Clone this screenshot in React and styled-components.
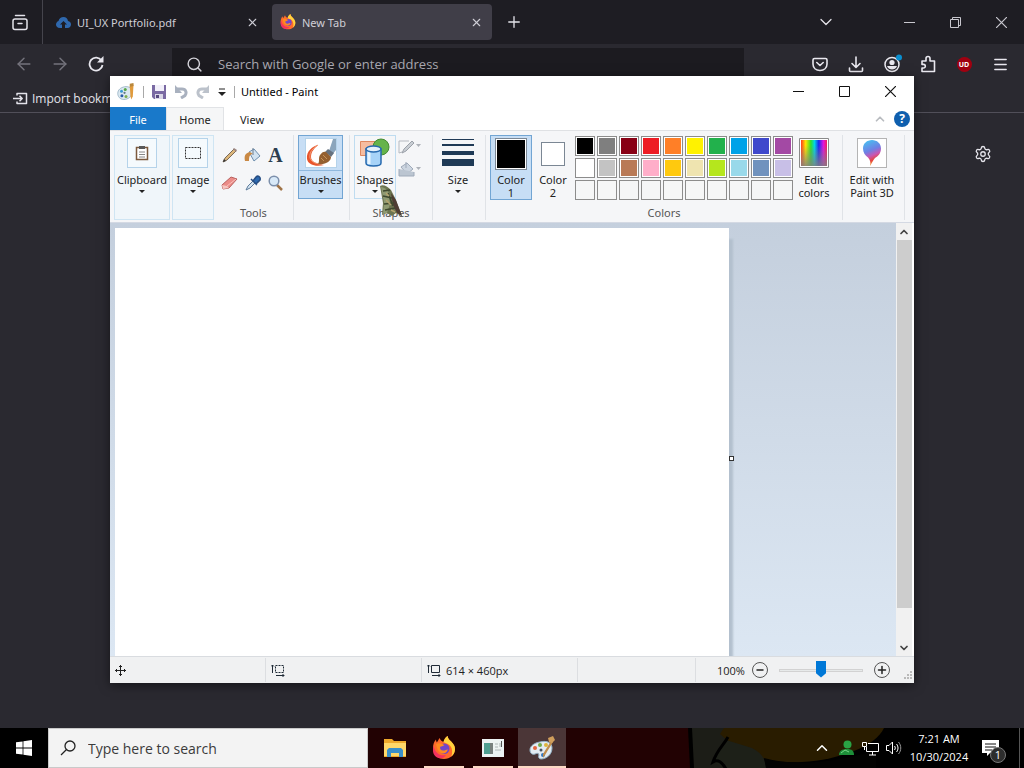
import { useState } from "react";
import styled, { createGlobalStyle, css } from "styled-components";
import {
  ArrowLeft,
  ArrowRight,
  ChevronDown,
  ChevronUp,
  Menu,
  Minus,
  Plus,
  Search,
  Settings,
  X,
} from "lucide-react";

const paletteColors = [
  ["#000000", "#7f7f7f", "#880015", "#ed1c24", "#ff7f27", "#fff200", "#22b14c", "#00a2e8", "#3f48cc", "#a349a4"],
  ["#ffffff", "#c3c3c3", "#b97a57", "#ffaec9", "#ffc90e", "#efe4b0", "#b5e61d", "#99d9ea", "#7092be", "#c8bfe7"],
  ["", "", "", "", "", "", "", "", "", ""],
];

const App = () => {
  const [zoom, setZoom] = useState(50);

  return (
    <Desktop>
      <GlobalStyle />
      <Browser>
        <TabStrip>
          <ViewButton aria-label="Firefox View">
            <FirefoxViewIcon />
          </ViewButton>
          <Tab>
            <CloudIcon />
            <TabTitle>UI_UX Portfolio.pdf</TabTitle>
            <TabClose aria-label="Close tab">
              <X size={13} strokeWidth={2} />
            </TabClose>
          </Tab>
          <Tab $active>
            <FirefoxIcon size={16} />
            <TabTitle>New Tab</TabTitle>
            <TabClose aria-label="Close tab">
              <X size={13} strokeWidth={2} />
            </TabClose>
          </Tab>
          <NewTabButton aria-label="New tab">
            <Plus size={18} strokeWidth={1.75} />
          </NewTabButton>
          <ListTabs aria-label="List all tabs">
            <ChevronDown size={20} strokeWidth={1.5} />
          </ListTabs>
          <WindowButtons>
            <WindowButton aria-label="Minimize">
              <MinimizeIcon />
            </WindowButton>
            <WindowButton aria-label="Restore">
              <RestoreIcon />
            </WindowButton>
            <WindowButton aria-label="Close">
              <CloseIcon />
            </WindowButton>
          </WindowButtons>
        </TabStrip>
        <NavBar>
          <NavButton aria-label="Back" $dim>
            <ArrowLeft size={20} strokeWidth={1.75} />
          </NavButton>
          <NavButton aria-label="Forward" $dim>
            <ArrowRight size={20} strokeWidth={1.75} />
          </NavButton>
          <NavButton aria-label="Reload">
            <ReloadIcon />
          </NavButton>
          <AddressBar>
            <Search size={17} strokeWidth={2} />
            <AddressInput
              type="text"
              aria-label="Address"
              placeholder="Search with Google or enter address"
            />
          </AddressBar>
          <NavButton aria-label="Pocket">
            <PocketIcon />
          </NavButton>
          <NavButton aria-label="Downloads">
            <DownloadIcon />
          </NavButton>
          <NavButton aria-label="Account">
            <AccountIcon />
          </NavButton>
          <NavButton aria-label="Extensions">
            <PuzzleIcon />
          </NavButton>
          <NavButton aria-label="uBlock">
            <Shield>UD</Shield>
          </NavButton>
          <NavButton aria-label="Menu">
            <Menu size={17} strokeWidth={2} />
          </NavButton>
        </NavBar>
        <BookmarksBar>
          <BookmarkButton>
            <ImportIcon />
            Import bookmarks...
          </BookmarkButton>
        </BookmarksBar>
        <Page>
          <SettingsButton aria-label="Personalize new tab">
            <Settings size={18} strokeWidth={1.75} />
          </SettingsButton>
        </Page>
      </Browser>

      <PaintWindow>
        <TitleBar>
          <QuickAccess>
            <PaletteIcon size={18} />
            <Divider />
            <QuickButton aria-label="Save">
              <SaveIcon />
            </QuickButton>
            <QuickButton aria-label="Undo">
              <UndoIcon />
            </QuickButton>
            <QuickButton aria-label="Redo">
              <RedoIcon />
            </QuickButton>
            <QuickButton aria-label="Customize toolbar">
              <svg width="8" height="8" viewBox="0 0 8 8">
                <path d="M1 1h6" stroke="#222" />
                <path d="M0 4h8L4 8z" fill="#222" />
              </svg>
            </QuickButton>
            <Divider />
          </QuickAccess>
          <WindowTitle>Untitled - Paint</WindowTitle>
          <WindowButtons>
            <PaintWindowButton aria-label="Minimize">
              <MinimizeIcon />
            </PaintWindowButton>
            <PaintWindowButton aria-label="Maximize">
              <svg width="11" height="11" viewBox="0 0 11 11">
                <path d="M.5.5h10v10H.5z" fill="none" stroke="currentColor" />
              </svg>
            </PaintWindowButton>
            <PaintWindowButton aria-label="Close">
              <CloseIcon />
            </PaintWindowButton>
          </WindowButtons>
        </TitleBar>

        <RibbonTabs>
          <FileTab>File</FileTab>
          <RibbonTab $active>Home</RibbonTab>
          <RibbonTab>View</RibbonTab>
          <RibbonHelp>
            <ChevronUp size={14} strokeWidth={3} color="#b9bcc0" />
            <HelpButton aria-label="Help">?</HelpButton>
          </RibbonHelp>
        </RibbonTabs>

        <Ribbon>
          <CollapsedGroup $width={56}>
            <IconFrame>
              <ClipboardIcon />
            </IconFrame>
            <ButtonLabel>Clipboard</ButtonLabel>
            <Caret />
          </CollapsedGroup>
          <CollapsedGroup $width={42}>
            <IconFrame>
              <SelectIcon />
            </IconFrame>
            <ButtonLabel>Image</ButtonLabel>
            <Caret />
          </CollapsedGroup>
          <Group $width={80}>
            <ToolGrid>
              <ToolButton aria-label="Pencil">
                <PencilIcon />
              </ToolButton>
              <ToolButton aria-label="Fill">
                <BucketIcon />
              </ToolButton>
              <ToolButton aria-label="Text">
                <TextGlyph>A</TextGlyph>
              </ToolButton>
              <ToolButton aria-label="Eraser">
                <EraserIcon />
              </ToolButton>
              <ToolButton aria-label="Color picker">
                <DropperIcon />
              </ToolButton>
              <ToolButton aria-label="Magnifier">
                <MagnifierIcon />
              </ToolButton>
            </ToolGrid>
            <GroupLabel>Tools</GroupLabel>
          </Group>
          <Group $width={56}>
            <GroupBody>
              <RibbonButton $width={45} $selected>
                <IconFrame $wide>
                  <BrushIcon />
                </IconFrame>
                <ButtonLabel $split>Brushes</ButtonLabel>
                <Caret />
              </RibbonButton>
            </GroupBody>
          </Group>
          <Group $width={83}>
            <GroupBody>
              <RibbonButton $width={42} $outlined>
                <ShapesIcon />
                <ButtonLabel>Shapes</ButtonLabel>
                <Caret />
              </RibbonButton>
              <StyleOptions>
                <StyleButton aria-label="Outline" disabled>
                  <OutlineIcon />
                </StyleButton>
                <StyleButton aria-label="Fill style" disabled>
                  <FillIcon />
                </StyleButton>
              </StyleOptions>
            </GroupBody>
            <GroupLabel>Shapes</GroupLabel>
          </Group>
          <Group $width={53}>
            <GroupBody>
              <RibbonButton $width={42}>
                <SizeIcon />
                <ButtonLabel>Size</ButtonLabel>
                <Caret />
              </RibbonButton>
            </GroupBody>
          </Group>
          <Group $width={357}>
            <GroupBody>
              <RibbonButton $width={42} $selected>
                <ColorSlot>
                  <CurrentColor $color="#000" $large />
                </ColorSlot>
                <ButtonLabel>
                  Color
                  <br />1
                </ButtonLabel>
              </RibbonButton>
              <RibbonButton $width={42}>
                <ColorSlot>
                  <CurrentColor $color="#fff" />
                </ColorSlot>
                <ButtonLabel>
                  Color
                  <br />2
                </ButtonLabel>
              </RibbonButton>
              <Palette>
                {paletteColors.flat().map((color, index) => (
                  <Swatch
                    key={index}
                    $color={color}
                    aria-label={color || "Empty color"}
                  />
                ))}
              </Palette>
              <RibbonButton $width={42}>
                <RainbowIcon />
                <ButtonLabel>Edit colors</ButtonLabel>
              </RibbonButton>
            </GroupBody>
            <GroupLabel>Colors</GroupLabel>
          </Group>
          <Group $width={62}>
            <GroupBody>
              <RibbonButton $width={50}>
                <IconFrame $gray>
                  <Paint3DIcon />
                </IconFrame>
                <ButtonLabel>
                  Edit with
                  <br />
                  Paint 3D
                </ButtonLabel>
              </RibbonButton>
            </GroupBody>
          </Group>
        </Ribbon>

        <Workspace>
          <CanvasArea>
            <Canvas>
              <Handle />
            </Canvas>
          </CanvasArea>
          <Scrollbar>
            <ScrollButton aria-label="Scroll up">
              <ChevronUp size={12} strokeWidth={3.5} />
            </ScrollButton>
            <ScrollThumb />
            <ScrollButton aria-label="Scroll down">
              <ChevronDown size={12} strokeWidth={3.5} />
            </ScrollButton>
          </Scrollbar>
        </Workspace>

        <StatusBar>
          <StatusCell>
            <MoveIcon />
          </StatusCell>
          <StatusCell>
            <SelectionSizeIcon dashed />
          </StatusCell>
          <StatusCell>
            <SelectionSizeIcon />
            614 × 460px
          </StatusCell>
          <StatusCell $grow />
          <ZoomControls>
            <ZoomLabel htmlFor="zoom">100%</ZoomLabel>
            <ZoomButton aria-label="Zoom out">
              <Minus size={10} strokeWidth={4} />
            </ZoomButton>
            <ZoomSlider
              id="zoom"
              type="range"
              value={zoom}
              onChange={(e) => setZoom(Number(e.target.value))}
            />
            <ZoomButton aria-label="Zoom in">
              <Plus size={12} strokeWidth={3} />
            </ZoomButton>
            <ResizeGrip width="8" height="8" viewBox="0 0 8 8">
              <path d="M6 0h2v2H6zM3 3h2v2H3zM6 3h2v2H6zM0 6h2v2H0zM3 6h2v2H3zM6 6h2v2H6z" fill="#b9b9b9" />
            </ResizeGrip>
          </ZoomControls>
        </StatusBar>
      </PaintWindow>

      <Pointer width="24" height="34" viewBox="0 0 24 34">
        <path d="M1 2c3-2 7 0 11 4l4 8 7 18-6-3-4 3-5-3-5 2 1-12z" fill="#6c7450" />
        <path d="M2 3c3 0 6 2 8 6l1 11-3 9-4 1 1-12z" fill="#8f9a72" />
        <path d="M12 9l5 7 6 16-5-3-4-8z" fill="#4f3c33" />
        <path d="M4 7l7-1M4 12l9 2M5 20l10-1M6 26l10-2M9 9l5 13" stroke="#3f482e" strokeWidth="1.500" fill="none" />
        <path d="M7 9l3 3M7 16l5 5M12 26l4 2" stroke="#b5a46e" strokeWidth="1.500" />
      </Pointer>

      <Taskbar>
        <Wallpaper viewBox="0 0 458 40" preserveAspectRatio="xMaxYMid slice">
          <path d="M0 0h125v40H0z" fill="#220203" />
          <path d="M123 0h38l-3 40h-31z" fill="#1c1d17" />
          <path d="M122 0h4l2 40h-4z" fill="#000" />
          <path d="M158 0h160c-8 18-45 32-82 34-42 2-65-12-82-28z" fill="#291c00" />
          <path d="M160 12l26 8c10 5 14 12 14 20h-42l-11-6z" fill="#1d2018" />
          <path d="M162 9c-5 9-11 13-15 25 5-3 9 0 13 7" fill="none" stroke="#000" strokeWidth="3" />
          <path d="M198 30c30 9 75 4 112-8v18H200z" fill="#030302" />
        </Wallpaper>
        <StartButton aria-label="Start">
          <svg width="16" height="16" viewBox="0 0 16 16" fill="#fff">
            <path d="M0 2.3l6.6-.9v6.1H0zM7.4 1.3L16 0v7.5H7.4zM0 8.4h6.6v6.2L0 13.7zM7.4 8.4H16V16l-8.6-1.2z" />
          </svg>
        </StartButton>
        <SearchBox>
          <SearchGlyph />
          <SearchInput
            type="text"
            aria-label="Search"
            placeholder="Type here to search"
          />
        </SearchBox>
        <TaskButtons>
          <TaskButton aria-label="File Explorer">
            <FolderIcon />
          </TaskButton>
          <TaskButton aria-label="Firefox" $running>
            <FirefoxIcon size={24} />
          </TaskButton>
          <TaskButton aria-label="Viewer" $running>
            <ViewerIcon />
          </TaskButton>
          <TaskButton aria-label="Paint" $active>
            <PaintAppIcon />
          </TaskButton>
        </TaskButtons>
        <Tray>
          <TrayButton aria-label="Show hidden icons">
            <ChevronUp size={18} strokeWidth={2} />
          </TrayButton>
          <TrayButton aria-label="Account status">
            <PersonIcon />
          </TrayButton>
          <TrayButton aria-label="Network">
            <NetworkIcon />
          </TrayButton>
          <TrayButton aria-label="Volume">
            <SpeakerIcon />
          </TrayButton>
          <Clock>
            <span>7:21 AM</span>
            <span>10/30/2024</span>
          </Clock>
          <NotificationButton aria-label="Notifications">
            <svg width="18" height="16" viewBox="0 0 18 16">
              <path d="M0 0h17v13H8l-3 3v-3H0z" fill="#fff" />
              <path d="M3 4h11M3 7h11M3 10h7" stroke="#111" />
            </svg>
            <Badge>1</Badge>
          </NotificationButton>
          <ShowDesktop aria-label="Show desktop" />
        </Tray>
      </Taskbar>
    </Desktop>
  );
};

export default App;

/* Icons */

const FirefoxViewIcon = () => (
  <svg width="16" height="17" viewBox="0 0 16 17" fill="none" stroke="#e4e3ea" strokeWidth="1.5" strokeLinecap="round">
    <path d="M3.500 1.500h9" />
    <rect x="1" y="5" width="14" height="10.500" rx="2" />
    <path d="M6 9.500h4" />
  </svg>
);

const CloudIcon = () => (
  <svg width="15" height="11" viewBox="0 0 15 11">
    <path d="M4 11C1 11 0 9 0 7.500S1 4.500 2.500 4C3.200 1.500 5 0 7.500 0s4 1.500 4.500 4c2 .3 3 1.600 3 3.500S13.500 11 11.500 11H9V7.500h2L7.500 4 4 7.500h2V11z" fill="#2f68ad" />
  </svg>
);

const FirefoxIcon = ({ size }) => (
  <svg width={size} height={size} viewBox="0 0 24 24">
    <path d="M12 23C5.500 23 1 18.500 1 12.300 1 8.500 2 5.500 4 3.500c0 1.200.2 2 .8 2.900C6 4.700 7 3 7.500 2c.8 2 2 3.300 4 4 .5-2.600 2-4.700 4.200-6 0 2.300 1.500 3.600 3.500 5.600 2.600 2.600 3.800 4.900 3.800 7.400C23 18.800 18.300 23 12 23z" fill="#ff6a2b" />
    <path d="M15.700 0c0 2.300 1.500 3.600 3.500 5.600 2.600 2.600 3.800 4.900 3.800 7.400 0 3-1.400 5.600-3.700 7.400 1.400-3.500 1.200-7.500-.9-10.400-1.600-2-4.200-2.400-6.900-4C12 3.400 13.500 1.300 15.700 0z" fill="#ffd33d" />
    <path d="M1.500 9.500C3 17 8 20.500 14 19c-2 4-9 5-12.300-1C.8 15.500.8 12 1.500 9.500z" fill="#f3325e" />
    <circle cx="12.300" cy="12.800" r="5.200" fill="#7146c8" />
    <path d="M4 8c3-1.500 6-.5 8.500 1.300-2 .7-2.800 1.500-4.300 1.500-.7 2.200 1 4 3.200 3.800 2 0 3-1.300 4.500-1-1 3-3.300 4.200-5.600 3.800C6.500 16.800 4.800 12.500 4 8z" fill="#ff8b1f" />
  </svg>
);

const MinimizeIcon = () => (
  <svg width="11" height="11" viewBox="0 0 11 11">
    <path d="M0 5.500h11" stroke="currentColor" />
  </svg>
);

const RestoreIcon = () => (
  <svg width="11" height="11" viewBox="0 0 11 11" fill="none" stroke="currentColor">
    <path d="M.5 2.500h8v8h-8zM2.500 2.500v-2h8v8h-2" />
  </svg>
);

const CloseIcon = () => (
  <svg width="11" height="11" viewBox="0 0 11 11">
    <path d="M0 0l11 11M11 0L0 11" stroke="currentColor" strokeWidth="1.200" />
  </svg>
);

const ReloadIcon = () => (
  <svg width="16" height="16" viewBox="0 0 16 16">
    <path d="M13.500 4.500A6.500 6.500 0 1 0 14.500 9" fill="none" stroke="currentColor" strokeWidth="1.800" />
    <path d="M15.500 0v6.500H9z" fill="currentColor" />
  </svg>
);

const PocketIcon = () => (
  <svg width="16" height="15" viewBox="0 0 16 15" fill="none" stroke="currentColor" strokeWidth="1.600" strokeLinecap="round" strokeLinejoin="round">
    <path d="M2.500 1.500h11c.8 0 1.500.6 1.500 1.500v4c0 4-3 6.500-7 6.500S1 11 1 7V3c0-.9.700-1.500 1.500-1.500z" />
    <path d="M4.800 5.500L8 8.500l3.200-3" />
  </svg>
);

const DownloadIcon = () => (
  <svg width="16" height="17" viewBox="0 0 16 17" fill="none" stroke="currentColor" strokeWidth="1.600" strokeLinecap="round" strokeLinejoin="round">
    <path d="M8 1v10M4 7.500l4 4 4-4M1.500 12v2.500c0 .6.400 1 1 1h11c.6 0 1-.4 1-1V12" />
  </svg>
);

const AccountIcon = () => (
  <svg width="20" height="20" viewBox="0 0 20 20">
    <circle cx="10" cy="10.500" r="7" fill="none" stroke="currentColor" strokeWidth="1.500" />
    <circle cx="10" cy="8.500" r="2.600" fill="currentColor" />
    <path d="M5 12h10c-1 2.600-3 3.500-5 3.500S6 14.600 5 12z" fill="currentColor" />
    <circle cx="17" cy="3.500" r="3" fill="#0a8fd0" />
  </svg>
);

const PuzzleIcon = () => (
  <svg width="17" height="18" viewBox="0 0 17 18" fill="none" stroke="currentColor" strokeWidth="1.600" strokeLinejoin="round">
    <path d="M2 6h4V3.500a2 2 0 0 1 4 0V6h4.500v10.500H2V13h1.500a1.800 1.800 0 0 0 0-3.600H2z" />
  </svg>
);

const ImportIcon = () => (
  <svg width="15" height="13" viewBox="0 0 15 13" fill="none" stroke="currentColor" strokeWidth="1.500" strokeLinejoin="round">
    <path d="M4 3.500V1.500h9.500v10H4v-2M0 6.500h9M6.500 3.800L9.200 6.500 6.500 9.200" />
  </svg>
);

const PaletteIcon = ({ size }) => (
  <svg width={size} height={size} viewBox="0 0 24 24">
    <path d="M10 5c6-1 10 2 10 7 0 6-5 10-11 10-5 0-8-4-8-8 0-5 4-8 9-9z" fill="#dbe8f0" stroke="#8caabd" />
    <circle cx="6" cy="11" r="2" fill="#3a9ad4" />
    <circle cx="11" cy="8.500" r="2" fill="#57a745" />
    <circle cx="6.500" cy="17" r="2" fill="#2d5ca8" />
    <circle cx="12" cy="18" r="2" fill="#7fae4e" />
    <circle cx="10" cy="13" r="1.500" fill="#607585" />
    <path d="M17 4l5-2-1 16-2 4-1-4z" fill="#e09a3c" />
    <path d="M17 1l5-1v4l-5 1z" fill="#b8873c" />
  </svg>
);

const PaintAppIcon = () => (
  <svg width="26" height="24" viewBox="0 0 26 24">
    <path d="M11 6c7-2 12 1 12 6 0 7-6 11-11 11-2 0-3-2-2-4 0-2-2-2-4-1-3 1-5-1-5-4 0-4 4-7 10-8z" fill="#e3ecf2" stroke="#93b2c6" />
    <circle cx="6" cy="12" r="2" fill="#e0653f" />
    <circle cx="11" cy="9" r="2" fill="#72ab4c" />
    <circle cx="17" cy="9" r="2" fill="#dfb53c" />
    <circle cx="12" cy="14" r="1.500" fill="#4a5561" />
    <circle cx="14" cy="19" r="2" fill="#3578c0" />
    <path d="M22 5l2 1-8 13-2 3v-4z" fill="#c08e4d" />
    <path d="M19 2l5-2 2 4-3 3-3-1z" fill="#cf9e5c" />
  </svg>
);

const SaveIcon = () => (
  <svg width="14" height="14" viewBox="0 0 14 14">
    <path d="M0 0h14v14H2l-2-2z" fill="#7a6aa3" />
    <path d="M3 0h9v6H3z" fill="#f2f0fa" />
    <path d="M3 9h8v5H3z" fill="#d9d6e6" />
    <path d="M4 10h3v3H4z" fill="#57497f" />
  </svg>
);

const UndoIcon = () => (
  <svg width="14" height="14" viewBox="0 0 14 14">
    <path d="M3 4h5c4 0 5 4 3 6.500L7 13" fill="none" stroke="#a9b1bf" strokeWidth="3" />
    <path d="M1 0v8h7z" fill="#a9b1bf" />
  </svg>
);

const RedoIcon = () => (
  <svg width="14" height="14" viewBox="0 0 14 14">
    <path d="M11 4H6C2 4 1 8 3 10.500L7 13" fill="none" stroke="#bcc2cb" strokeWidth="3" />
    <path d="M13 0v8H6z" fill="#bcc2cb" />
  </svg>
);

const ClipboardIcon = () => (
  <svg width="14" height="16" viewBox="0 0 14 16">
    <path d="M1.500 2.500h11v12h-11z" fill="#fff" stroke="#7c5a3e" strokeWidth="1.500" />
    <path d="M4 1h6v3H4z" fill="#595959" />
    <path d="M4 7h6M4 9.500h6M4 12h6" stroke="#888" />
  </svg>
);

const SelectIcon = () => (
  <svg width="16" height="12" viewBox="0 0 16 12">
    <path d="M.5.5h15v11H.5z" fill="none" stroke="#333" strokeDasharray="2 1" />
  </svg>
);

const PencilIcon = () => (
  <svg width="16" height="16" viewBox="0 0 16 16">
    <path d="M1 15l2-4 9-9 2 2-9 9z" fill="#dcb67a" stroke="#7b6a58" />
    <path d="M1 15l1-3 2 2z" fill="#333" />
    <path d="M11 2l1-1 3 2-1 2z" fill="#9c8580" />
  </svg>
);

const BucketIcon = () => (
  <svg width="17" height="16" viewBox="0 0 17 16">
    <path d="M5 5l5-3 6 7-6 5z" fill="#d3e3f1" stroke="#6d8eae" />
    <path d="M9 1v7" stroke="#6b7f92" />
    <path d="M1 14c-1-5 0-8 5-9l3 2c-3 0-4 2-4 7z" fill="#c98945" />
  </svg>
);

const EraserIcon = () => (
  <svg width="17" height="14" viewBox="0 0 17 14">
    <path d="M1 9l9-8 6 2-8 9-6 1z" fill="#eb8c88" stroke="#b9605e" />
    <path d="M1 9l5 1 2 2-6 1z" fill="#f6c5c0" />
    <path d="M6 10l9-7" stroke="#fac0bb" />
  </svg>
);

const DropperIcon = () => (
  <svg width="16" height="16" viewBox="0 0 16 16">
    <path d="M1 15l2-4 5-5 2 2-5 5z" fill="#d6e5f2" stroke="#5d7c9c" />
    <path d="M6 4l6 6M8 6l3-4c2-2 5 0 4 3l-4 4z" fill="#2d6ab1" stroke="#274e83" strokeWidth="1.500" />
  </svg>
);

const MagnifierIcon = () => (
  <svg width="16" height="16" viewBox="0 0 16 16">
    <path d="M9 10l5 5" stroke="#a07448" strokeWidth="2.500" />
    <circle cx="6" cy="6" r="4.800" fill="#d8e9f8" stroke="#7c8fab" strokeWidth="1.500" />
  </svg>
);

const BrushIcon = () => (
  <svg width="30" height="28" viewBox="0 0 30 28">
    <path d="M12 6C7 7 0 12 1 20c1 6 9 8 17 6-7-1-13-3-13-8 0-6 4-9 7-12z" fill="#e8552c" />
    <path d="M12 6C7 9 3 13 4 19c2 5 7 6 12 6" stroke="#f39a73" fill="none" />
    <path d="M23 12l4-12 3 0v11l-4 5z" fill="#8ba5bc" />
    <path d="M22 10l6 4-3 4-6-5z" fill="#66727f" />
    <path d="M14 16c2-3 4-4 6-3l5 5c0 4-5 8-13 7 2-3 0-6 2-9z" fill="#946030" />
    <path d="M17 16l4 4M15 19l3 3" stroke="#c79358" />
  </svg>
);

const ShapesIcon = () => (
  <svg width="32" height="30" viewBox="0 0 32 30">
    <path d="M1.500 3.500h15v14h-15z" fill="#f6bda0" stroke="#df8860" />
    <circle cx="22" cy="9" r="8" fill="#65b34b" stroke="#458b32" />
    <path d="M7 11v14c0 4 15 4 15 0V11z" fill="#a7d3f8" stroke="#276aaf" strokeWidth="1.500" />
    <path d="M10 13v13" stroke="#e8f5ff" strokeWidth="3" />
    <ellipse cx="14.500" cy="11" rx="7.500" ry="3" fill="#e5f2fc" stroke="#276aaf" strokeWidth="1.500" />
  </svg>
);

const OutlineIcon = () => (
  <svg width="24" height="16" viewBox="0 0 24 16">
    <path d="M11 2H1v12l3-1" fill="none" stroke="#b5b9c0" />
    <path d="M4 14l2-4 8-8 2 2-8 8z" fill="#c9ced4" stroke="#9ba1a9" />
    <path d="M18 5h5l-2.500 3z" fill="#aeb2b9" />
  </svg>
);

const FillIcon = () => (
  <svg width="24" height="16" viewBox="0 0 24 16">
    <path d="M3 6l6-4 6 6-6 5z" fill="#ccd5e0" stroke="#9faab9" />
    <path d="M8 1v6M1 8v7h15v-4" stroke="#9faab9" fill="#bbc5d1" />
    <path d="M18 6h5l-2.500 3z" fill="#aeb2b9" />
  </svg>
);

const SizeIcon = () => (
  <svg width="32" height="30" viewBox="0 0 32 30" fill="#1f3a56">
    <path d="M0 1h32v1H0zM0 6h32v2H0zM0 13h32v4H0zM0 21h32v7H0z" />
  </svg>
);

const RainbowIcon = () => (
  <svg width="30" height="30" viewBox="0 0 30 30">
    <defs>
      <linearGradient id="hues">
        <stop offset="0" stopColor="#ff3b1f" />
        <stop offset=".18" stopColor="#ffe600" />
        <stop offset=".38" stopColor="#2de02d" />
        <stop offset=".52" stopColor="#00d5e6" />
        <stop offset=".68" stopColor="#1b28ef" />
        <stop offset=".86" stopColor="#e014e0" />
        <stop offset="1" stopColor="#f0205a" />
      </linearGradient>
      <linearGradient id="fade" x2="0" y2="1">
        <stop offset=".2" stopColor="#808080" stopOpacity="0" />
        <stop offset="1" stopColor="#808080" stopOpacity=".85" />
      </linearGradient>
    </defs>
    <path d="M.5.5h29v29H.5z" fill="#fff" stroke="#8a8a8a" />
    <path d="M2 2h26v26H2z" fill="url(#hues)" />
    <path d="M2 2h26v26H2z" fill="url(#fade)" />
  </svg>
);

const Paint3DIcon = () => (
  <svg width="18" height="26" viewBox="0 0 18 26">
    <defs>
      <linearGradient id="drop" x1=".3" y1="0" x2=".6" y2="1">
        <stop offset="0" stopColor="#49bdf0" />
        <stop offset=".4" stopColor="#6f7fe4" />
        <stop offset=".6" stopColor="#c857b4" />
        <stop offset=".78" stopColor="#e8443c" />
        <stop offset="1" stopColor="#f3c52c" />
      </linearGradient>
    </defs>
    <path d="M9 0c5 0 9 3.500 9 8.500 0 5-3 7.500-6 9.500-2 2-3 5-5 8 1-4 0-6-2-8.500-3-2-5-5-5-9C0 3.500 4 0 9 0z" fill="url(#drop)" />
  </svg>
);

const MoveIcon = () => (
  <svg width="11" height="11" viewBox="0 0 11 11" fill="none" stroke="#222">
    <path d="M5.500 0v11M0 5.500h11M4 2l1.500-1.500L7 2M4 9l1.500 1.500L7 9M2 4L.5 5.500 2 7M9 4l1.500 1.500L9 7" />
  </svg>
);

const SelectionSizeIcon = ({ dashed }) => (
  <svg width="14" height="13" viewBox="0 0 14 13" fill="none" stroke="#1f2a36">
    <path d="M1.500 1v8M0 2.500L1.500 1 3 2.500M5 11.500h8M11.500 10l1.500 1.500-1.500 1.500" />
    <path d="M4.500 1.500h8v7h-8z" strokeDasharray={dashed ? "2 1" : undefined} />
  </svg>
);

const SearchGlyph = () => (
  <svg width="16" height="16" viewBox="0 0 16 16" fill="none" stroke="#222" strokeWidth="1.300">
    <circle cx="10" cy="6" r="5" />
    <path d="M6.500 9.500L1 15" />
  </svg>
);

const FolderIcon = () => (
  <svg width="22" height="18" viewBox="0 0 22 18">
    <path d="M0 0h8l2 2h12v16H0z" fill="#eea92b" />
    <path d="M0 4h22v13H0z" fill="#ffd869" />
    <path d="M3 18v-7l2-2h12l2 2v7h-4v-4H7v4z" fill="#3a8fc8" />
  </svg>
);

const ViewerIcon = () => (
  <svg width="22" height="18" viewBox="0 0 22 18">
    <path d="M0 0h22v18H0z" fill="#edf3f3" />
    <path d="M2 4h9v11H2z" fill="#4f9f91" />
    <path d="M8 4h3v11H8z" fill="#78807e" />
    <path d="M13 5h3M13 8h3M13 11h6M18 4v4" stroke="#aeb6b6" />
    <path d="M19.500 2v6" stroke="#555" />
  </svg>
);

const PersonIcon = () => (
  <svg width="17" height="16" viewBox="0 0 17 16">
    <circle cx="9.500" cy="4.500" r="4" fill="#2aa244" />
    <path d="M1 15c0-4 3-6 8-6s7 2 7 6z" fill="#1d8f39" />
    <path d="M3 13l4-3 4 2" stroke="#79d68a" fill="none" />
  </svg>
);

const NetworkIcon = () => (
  <svg width="17" height="15" viewBox="0 0 17 15" fill="none" stroke="#fff">
    <path d="M6 2.500h10.500v8H4.500V6M10.500 11v3M7 14h7" />
    <path d="M.5 1.500h4v4h-4zM2.500 5.500V9" />
  </svg>
);

const SpeakerIcon = () => (
  <svg width="16" height="14" viewBox="0 0 16 14" fill="none" stroke="#fff">
    <path d="M.5 4.500H3L6.500 1v12L3 9.500H.5z" />
    <path d="M8.500 5c1 1.300 1 2.700 0 4M10.500 3c2 2.500 2 5.500 0 8" />
    <path d="M12.500 1c3 3.500 3 8.500 0 12" stroke="#999" />
  </svg>
);

/* Styles */

const GlobalStyle = createGlobalStyle`
  * {
    box-sizing: border-box;
  }

  body {
    margin: 0;
    font-family: "Open Sans", "Noto Sans", sans-serif;
    font-size: 12px;
  }

  button {
    padding: 0;
    border: none;
    background: none;
    color: inherit;
    font: inherit;
  }

  svg {
    flex-shrink: 0;
  }
`;

const labelFont = css`
  font-family: "Noto Sans", "Open Sans", sans-serif;
  font-size: 11px;
`;

const Desktop = styled.div`
  position: relative;
  display: flex;
  flex-direction: column;
  height: 100vh;
  overflow: hidden;
`;

const Browser = styled.main`
  flex: 1;
  display: flex;
  flex-direction: column;
  background: #2a2930;
  color: #e4e3ea;
`;

const TabStrip = styled.div`
  display: flex;
  align-items: center;
  height: 44px;
  background: #1e1d23;
`;

const ViewButton = styled.button`
  display: flex;
  align-items: center;
  justify-content: center;
  width: 43px;
  height: 44px;
  padding-right: 3px;
  margin-right: 5px;
  border-right: 1px solid #45444c;
`;

const Tab = styled.div`
  ${labelFont}
  display: flex;
  align-items: center;
  gap: 6px;
  width: 220px;
  height: 36px;
  padding: 0 9px 0 8px;
  margin-right: 4px;
  border-radius: 4px;
  background: ${({ $active }) => ($active ? "#403e48" : "transparent")};
  color: #cfced6;
`;

const TabTitle = styled.span`
  flex: 1;
`;

const TabClose = styled.button`
  display: flex;
`;

const NewTabButton = styled.button`
  display: flex;
  justify-content: center;
  width: 36px;
`;

const ListTabs = styled.button`
  display: flex;
  justify-content: center;
  width: 36px;
  margin-left: auto;
  margin-right: 42px;
`;

const WindowButtons = styled.div`
  display: flex;
`;

const WindowButton = styled.button`
  display: flex;
  align-items: center;
  justify-content: center;
  width: 46px;
  height: 30px;
  color: #c9c8cf;
`;

const NavBar = styled.div`
  display: flex;
  align-items: center;
  height: 40px;
  padding: 0 6px;
`;

const NavButton = styled.button`
  display: flex;
  align-items: center;
  justify-content: center;
  width: 36px;
  height: 32px;
  color: ${({ $dim }) => ($dim ? "#74737c" : "#e9e8ef")};
`;

const AddressBar = styled.div`
  flex: 1;
  display: flex;
  align-items: center;
  gap: 15px;
  height: 32px;
  margin: 0 58px;
  padding: 0 14px;
  background: #1c1b20;
  color: #d5d4db;
`;

const AddressInput = styled.input`
  flex: 1;
  padding: 0;
  border: none;
  outline: none;
  background: transparent;
  color: #fff;
  font: inherit;
  font-size: 13px;

  &::placeholder {
    color: #a9a8b0;
    opacity: 1;
  }
`;

const Shield = styled.span`
  width: 15px;
  border-radius: 50%;
  background: #a00010;
  color: #fff;
  font-size: 7px;
  font-weight: 700;
  line-height: 15px;
`;

const BookmarksBar = styled.div`
  display: flex;
  align-items: center;
  height: 29px;
  padding: 0 13px;
  border-bottom: 1px solid #514f59;
`;

const BookmarkButton = styled.button`
  display: flex;
  align-items: center;
  gap: 4px;
`;

const Page = styled.div`
  display: flex;
  justify-content: flex-end;
  padding: 32px;
`;

const SettingsButton = styled.button`
  display: flex;
`;

const PaintWindow = styled.section`
  position: absolute;
  top: 76px;
  right: 110px;
  bottom: 85px;
  left: 110px;
  display: flex;
  flex-direction: column;
  background: #fff;
  color: #222;
  font-size: 11px;
  box-shadow: 0 2px 10px rgba(0, 0, 0, 0.5);
`;

const TitleBar = styled.header`
  display: flex;
  align-items: center;
  height: 31px;
  padding-right: 1px;
`;

const QuickAccess = styled.div`
  display: flex;
  align-items: center;
  gap: 8px;
  padding-left: 7px;
`;

const Divider = styled.span`
  width: 1px;
  height: 12px;
  background: #a8a8a8;
`;

const QuickButton = styled.button`
  display: flex;
`;

const WindowTitle = styled.h1`
  ${labelFont}
  flex: 1;
  margin: 0 0 0 6px;
  color: #000;
  font-weight: 400;
`;

const PaintWindowButton = styled(WindowButton)`
  color: #111;
`;

const RibbonTabs = styled.nav`
  display: flex;
  height: 23px;
`;

const RibbonTab = styled.button`
  ${labelFont}
  width: ${({ $active }) => ($active ? "58px" : "56px")};
  border: 1px solid ${({ $active }) => ($active ? "#e1e3e6" : "transparent")};
  border-bottom: none;
  background: ${({ $active }) => ($active ? "#f5f6f7" : "transparent")};
`;

const FileTab = styled(RibbonTab)`
  background: #1979ca;
  color: #fff;
`;

const RibbonHelp = styled.div`
  display: flex;
  align-items: center;
  gap: 7px;
  margin-left: auto;
  padding-right: 4px;
`;

const HelpButton = styled.button`
  width: 16px;
  height: 16px;
  border-radius: 50%;
  background: #0f5fae;
  color: #fff;
  font-size: 12px;
  font-weight: 700;
  line-height: 16px;
`;

const Ribbon = styled.div`
  ${labelFont}
  display: flex;
  height: 93px;
  padding: 4px 4px 2px;
  border-top: 1px solid #dfe1e4;
  border-bottom: 1px solid #d4d9e3;
  background: #f5f6f8;
`;

const ribbonColumn = css`
  display: flex;
  flex-direction: column;
  align-items: center;
  flex-shrink: 0;
  width: ${({ $width }) => $width}px;
`;

const CollapsedGroup = styled.button`
  ${ribbonColumn}
  margin-right: 2px;
  padding-top: 2px;
  border: 1px solid #cfe5f3;
  background: #f0f6fa;

  & + & {
    margin-right: 0;
  }
`;

const Group = styled.div`
  display: flex;
  flex-direction: column;
  flex-shrink: 0;
  width: ${({ $width }) => $width}px;
  padding: 0 4px;
  border-right: 1px solid #e0e3e7;
`;

const GroupBody = styled.div`
  flex: 1;
  display: flex;
`;

const GroupLabel = styled.span`
  color: #555;
  line-height: 14px;
  text-align: center;
`;

const RibbonButton = styled.button`
  ${ribbonColumn}
  align-self: flex-start;
  min-height: 64px;
  padding-top: 2px;
  border: 1px solid
    ${({ $selected, $outlined }) =>
      $selected ? "#72a5d3" : $outlined ? "#bfdcf0" : "transparent"};
  background: ${({ $selected }) => ($selected ? "#c7def5" : "transparent")};
`;

const IconFrame = styled.span`
  display: flex;
  align-items: center;
  justify-content: center;
  width: ${({ $wide }) => ($wide ? 32 : 30)}px;
  height: 30px;
  border: 1px solid ${({ $gray }) => ($gray ? "#b4b4b4" : "#b5d3ea")};
  background: ${({ $wide, $gray }) => ($wide || $gray ? "#fff" : "#f5fafd")};
`;

const ButtonLabel = styled.span`
  align-self: stretch;
  margin-top: ${({ $split }) => ($split ? 2 : 5)}px;
  padding-top: ${({ $split }) => ($split ? 2 : 0)}px;
  border-top: ${({ $split }) => ($split ? "1px solid #8fb8dd" : "none")};
  line-height: 13px;
  text-align: center;
`;

const Caret = styled.span`
  margin-top: 4px;
  border: 3px solid transparent;
  border-top-color: #222;
  border-bottom: none;
`;

const ToolGrid = styled.div`
  flex: 1;
  display: grid;
  grid-template-columns: repeat(3, 23px);
  grid-template-rows: 28px 28px;
  padding-top: 6px;
`;

const ToolButton = styled.button`
  display: flex;
  align-items: center;
  justify-content: center;
`;

const TextGlyph = styled.span`
  color: #2c3e50;
  font-family: "Liberation Serif", serif;
  font-size: 20px;
  font-weight: 700;
`;

const StyleOptions = styled.div`
  display: flex;
  flex-direction: column;
  gap: 6px;
  padding: 4px 0 0 2px;
`;

const StyleButton = styled.button`
  display: flex;
`;

const ColorSlot = styled.span`
  display: flex;
  align-items: center;
  justify-content: center;
  height: 32px;
  margin-bottom: -2px;
`;

const CurrentColor = styled.span`
  width: ${({ $large }) => ($large ? 32 : 24)}px;
  height: ${({ $large }) => ($large ? 32 : 24)}px;
  border: 1px solid #7b8794;
  background: ${({ $color }) => $color};
  box-shadow: inset 0 0 0 1px #fff;
`;

const Palette = styled.div`
  display: grid;
  grid-template-columns: repeat(10, 20px);
  grid-auto-rows: 20px;
  align-self: flex-start;
  gap: 2px;
  padding: 1px 0 0 1px;
`;

const Swatch = styled.button`
  border: 1px solid #8c8c8c;
  background: ${({ $color }) => $color || "#f5f6f7"};
  box-shadow: inset 0 0 0 1px ${({ $color }) => ($color ? "#fff" : "#f5f6f7")};
`;

const Workspace = styled.div`
  flex: 1;
  display: flex;
  min-height: 0;
  padding-right: 2px;
`;

const CanvasArea = styled.div`
  flex: 1;
  overflow: hidden;
  padding: 5px;
  background: linear-gradient(#c4cfdd, #dce7f3);
`;

const Canvas = styled.div`
  position: relative;
  width: 614px;
  height: 460px;
  background: #fff;
  box-shadow: 5px 10px 2px -1px #b3c0ce;
`;

const Handle = styled.span`
  position: absolute;
  top: 50%;
  right: -5px;
  width: 5px;
  height: 5px;
  margin-top: -2px;
  border: 1px solid #333;
  background: #fff;
`;

const Scrollbar = styled.div`
  display: flex;
  flex-direction: column;
  width: 16px;
  background: #f1f1f1;
`;

const ScrollButton = styled.button`
  display: flex;
  align-items: center;
  justify-content: center;
  height: 17px;
  color: #444;

  &:last-child {
    margin-top: auto;
  }
`;

const ScrollThumb = styled.div`
  height: 85%;
  margin-left: 1px;
  background: #cdcdcd;
`;

const StatusBar = styled.footer`
  display: flex;
  align-items: center;
  height: 27px;
  border-top: 1px solid #d9dce0;
  background: #f0f1f2;
`;

const StatusCell = styled.div`
  display: flex;
  align-items: center;
  gap: 5px;
  flex: ${({ $grow }) => ($grow ? "1" : "0 0 156px")};
  height: 24px;
  padding-left: 5px;
  border-right: 1px solid #dcdee1;
`;

const ZoomControls = styled.div`
  display: flex;
  align-items: center;
  gap: 6px;
  padding: 0 2px 0 21px;
`;

const ZoomLabel = styled.label`
  width: 29px;
`;

const ZoomButton = styled.button`
  display: flex;
  align-items: center;
  justify-content: center;
  width: 16px;
  height: 16px;
  border: 1px solid #555;
  border-radius: 50%;
`;

const ZoomSlider = styled.input`
  width: 84px;
  height: 18px;
  margin: 0 5px;
  appearance: none;
  background: transparent;

  &::-webkit-slider-runnable-track {
    height: 3px;
    border: 1px solid #d2d2d2;
    background: #e7eaea;
  }

  &::-webkit-slider-thumb {
    appearance: none;
    width: 10px;
    height: 17px;
    margin-top: -9px;
    background: #0078d7;
    clip-path: polygon(0 0, 100% 0, 100% 75%, 50% 100%, 0 75%);
  }
`;

const ResizeGrip = styled.svg`
  align-self: flex-end;
  margin-left: 8px;
`;

const Pointer = styled.svg`
  position: absolute;
  top: 184px;
  left: 379px;
`;

const Taskbar = styled.footer`
  position: relative;
  display: flex;
  height: 40px;
  background: linear-gradient(90deg, #000 48px, #220203 48px, #220203 567px, #000 567px);
  color: #fff;
`;

const Wallpaper = styled.svg`
  position: absolute;
  top: 0;
  right: 0;
  width: 458px;
  height: 40px;
`;

const StartButton = styled.button`
  display: flex;
  align-items: center;
  justify-content: center;
  width: 48px;
`;

const SearchBox = styled.div`
  display: flex;
  align-items: center;
  gap: 12px;
  width: 320px;
  padding: 0 11px;
  border: 1px solid #c9c9c9;
  background: #f3f3f3;
`;

const SearchInput = styled.input`
  flex: 1;
  padding: 0;
  border: none;
  outline: none;
  background: transparent;
  font: inherit;
  font-size: 14px;

  &::placeholder {
    color: #3b3b3b;
    opacity: 1;
  }
`;

const TaskButtons = styled.div`
  display: flex;
  gap: 1px;
  margin-left: 3px;
`;

const TaskButton = styled.button`
  position: relative;
  display: flex;
  align-items: center;
  justify-content: center;
  width: 48px;
  background: ${({ $active }) => ($active ? "#4b3637" : "transparent")};

  &::after {
    content: "";
    position: absolute;
    right: ${({ $active }) => ($active ? 0 : 4)}px;
    bottom: 0;
    left: ${({ $active }) => ($active ? 0 : 4)}px;
    height: 2px;
    background: ${({ $active, $running }) =>
      $active || $running ? "#fbd9c4" : "transparent"};
  }
`;

const Tray = styled.div`
  position: relative;
  display: flex;
  align-items: center;
  margin-left: auto;
`;

const TrayButton = styled.button`
  display: flex;
  align-items: center;
  justify-content: center;
  width: 24px;
  height: 40px;
`;

const Clock = styled.div`
  display: flex;
  flex-direction: column;
  width: 66px;
  font-size: 11px;
  line-height: 18px;
  text-align: center;
`;

const NotificationButton = styled.button`
  position: relative;
  display: flex;
  align-items: center;
  justify-content: center;
  width: 38px;
  height: 40px;
  margin-right: 9px;
`;

const Badge = styled.span`
  position: absolute;
  right: 4px;
  bottom: 5px;
  width: 16px;
  height: 16px;
  border: 1px solid #777;
  border-radius: 50%;
  background: #2d2d2d;
  font-size: 11px;
  line-height: 14px;
`;

const ShowDesktop = styled.button`
  width: 5px;
  height: 40px;
  border-left: 1px solid #555;
`;
